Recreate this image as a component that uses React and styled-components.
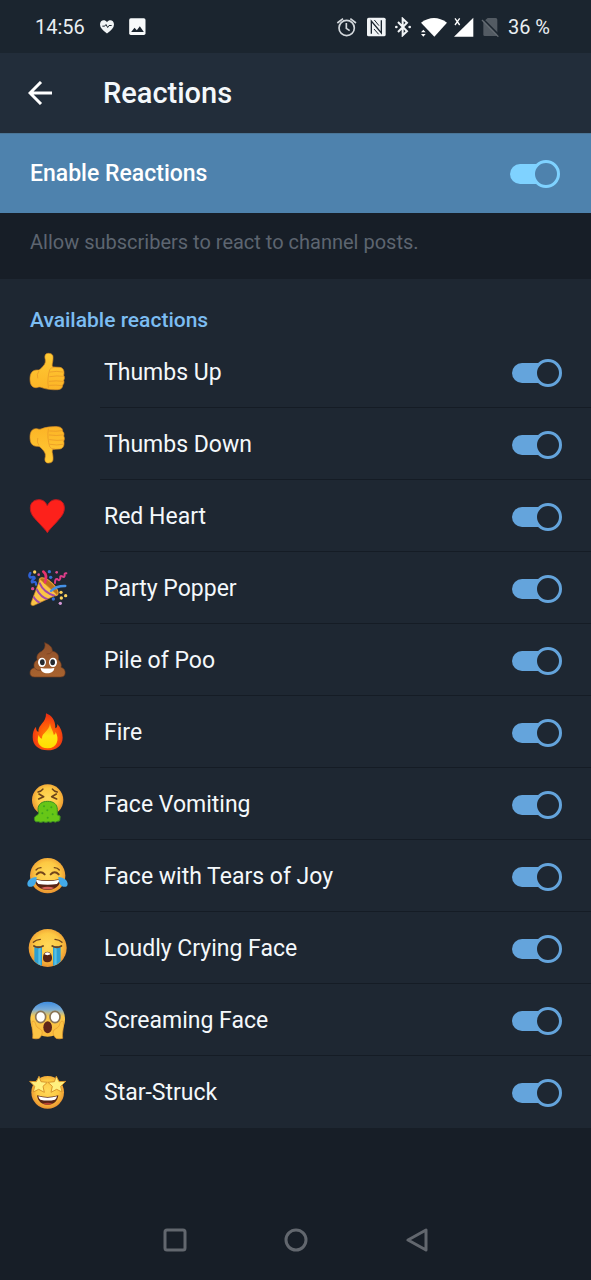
import React, { useState } from "react";
import styled, { createGlobalStyle } from "styled-components";

const GlobalStyle = createGlobalStyle`
  *,
  *::before,
  *::after {
    box-sizing: border-box;
  }

  body {
    margin: 0;
    background-color: #171e27;
    font-family: Roboto, "Liberation Sans", sans-serif;
    color: #f4f8fb;
  }
`;

const Page = styled.div`
  min-height: 100vh;
  display: flex;
  flex-direction: column;
`;

const StatusBar = styled.div`
  height: 53px;
  padding: 0 41px 0 35px;
  display: flex;
  align-items: center;
  justify-content: space-between;
  background-color: #1b252f;
  color: #e9eef2;
  font-size: 20px;
  line-height: 24px;
`;

const StatusGroup = styled.div`
  display: flex;
  align-items: center;
  gap: ${(props) => props.$gap}px;
`;

const Header = styled.header`
  height: 80px;
  padding: 0 28px;
  display: flex;
  align-items: center;
  gap: 51px;
  background-color: #222d3a;

  h1 {
    margin: 0;
    font-size: 29px;
    font-weight: 500;
    line-height: 36px;
  }
`;

const BackButton = styled.button`
  width: 24px;
  height: 24px;
  padding: 0;
  border: none;
  background: none;
  color: white;
  cursor: pointer;
`;

const EnableRow = styled.label`
  height: 80px;
  padding: 1px 31px 0 30px;
  display: flex;
  align-items: center;
  justify-content: space-between;
  background-color: #4e82ad;
  border-top: 1px solid #4a7596;
  color: white;
  font-size: 23px;
  font-weight: 500;
  line-height: 28px;
  cursor: pointer;
`;

const Info = styled.p`
  height: 66px;
  margin: 0;
  padding: 16px 30px;
  color: #5d6570;
  font-size: 20px;
  line-height: 26px;
`;

const Section = styled.section`
  background-color: #1e2732;

  h2 {
    margin: 0;
    padding: 27px 30px 2px;
    color: #7cbdf2;
    font-size: 21px;
    font-weight: 500;
    line-height: 28px;
  }
`;

const List = styled.ul`
  margin: 0;
  padding: 0;
  list-style: none;
`;

const Row = styled.label`
  height: 72px;
  padding-left: 27px;
  display: flex;
  align-items: center;
  gap: 33px;
  cursor: pointer;
`;

const RowBody = styled.span`
  flex: 1;
  align-self: stretch;
  padding: 3px 29px 0 4px;
  display: flex;
  align-items: center;
  justify-content: space-between;
  border-bottom: 1px solid #151c25;
  font-size: 23px;
  line-height: 28px;

  li:last-child & {
    border-bottom-color: transparent;
  }
`;

const Toggle = styled.input`
  appearance: none;
  width: 50px;
  height: 28px;
  margin: 0;
  display: grid;
  align-items: center;
  cursor: pointer;

  &::before,
  &::after {
    content: "";
    grid-area: 1 / 1;
  }

  &::before {
    width: 40px;
    height: 20px;
    border-radius: 10px;
    background-color: ${(props) => props.$color};
  }

  &::after {
    width: 28px;
    height: 28px;
    justify-self: end;
    border: 3px solid ${(props) => props.$color};
    border-radius: 50%;
    background-color: ${(props) => props.$fill};
  }

  &:not(:checked)::before {
    justify-self: end;
    opacity: 0.4;
  }

  &:not(:checked)::after {
    justify-self: start;
  }
`;

const NavBar = styled.nav`
  height: 80px;
  margin-top: auto;
  padding: 0 114px;
  display: flex;
  color: #62676e;
`;

const NavButton = styled.button`
  flex: 1;
  padding: 0;
  display: flex;
  align-items: center;
  justify-content: center;
  border: none;
  background: none;
  color: inherit;
  cursor: pointer;
`;

const Emoji = styled.svg`
  width: 40px;
  height: 40px;
  flex: none;
  overflow: visible;
`;

const Defs = styled.svg`
  width: 0;
  height: 0;
  display: block;
`;

const Gradients = () => (
  <Defs aria-hidden="true">
    <defs>
      <radialGradient id="skin" cx="50%" cy="45%" r="55%">
        <stop offset="0" stopColor="#ffd95a" />
        <stop offset="0.6" stopColor="#fdc943" />
        <stop offset="1" stopColor="#eb9330" />
      </radialGradient>
      <linearGradient id="hand" x1="0" y1="0" x2="0" y2="1">
        <stop offset="0" stopColor="#ffcb35" />
        <stop offset="1" stopColor="#fcb426" />
      </linearGradient>
      <linearGradient id="scared" x1="0" y1="0" x2="0" y2="1">
        <stop offset="0" stopColor="#3e8de0" />
        <stop offset="0.22" stopColor="#78abd8" />
        <stop offset="0.42" stopColor="#fbcb4e" />
        <stop offset="1" stopColor="#f9b93a" />
      </linearGradient>
      <radialGradient id="flame" cx="50%" cy="60%" r="60%">
        <stop offset="0" stopColor="#ff8a00" />
        <stop offset="0.65" stopColor="#fb4c0c" />
        <stop offset="1" stopColor="#e52a14" />
      </radialGradient>
      <linearGradient id="core" x1="0" y1="0" x2="0" y2="1">
        <stop offset="0" stopColor="#ffa51c" />
        <stop offset="0.5" stopColor="#ffe512" />
        <stop offset="1" stopColor="#ffdc00" />
      </linearGradient>
      <linearGradient id="poo" x1="0" y1="0" x2="0" y2="1">
        <stop offset="0" stopColor="#8f502b" />
        <stop offset="1" stopColor="#a8632f" />
      </linearGradient>
      <clipPath id="cone">
        <path d="M39 34 L90 80 L21 112 Q11 115 12 105 Z" />
      </clipPath>
      <clipPath id="cryFace">
        <circle cx="62" cy="60" r="56" />
      </clipPath>
    </defs>
  </Defs>
);

const Thumb = () => (
  <>
    <path
      d="M64 4C54 4 52 13 55 23C57 34 50 41 43 48C39 53 35 55 30 54C14 54 9 66 9 81C9 96 14 107 27 107C33 107 36 104 42 106C56 112 76 114 92 113C103 112 107 107 107 99C111 96 112 90 110 85C113 80 113 74 110 70C113 60 110 47 98 46L80 45C74 44 75 38 77 30C78 24 79 14 77 10C75 6 70 4 64 4Z"
      fill="url(#hand)"
      stroke="#d98c22"
      strokeWidth="2"
    />
    <g fill="none" stroke="#e59226" strokeWidth="2" strokeLinecap="round">
      <path d="M64 106C61 88 63 70 68 53Q72 46 82 46" />
      <path d="M69 60Q90 56 108 60M68 74Q90 70 110 73M67 88Q88 85 108 88M68 100Q88 98 104 101" />
      <path d="M35 58Q28 66 32 78" />
    </g>
  </>
);

const ThumbsUp = () => <Thumb />;

const ThumbsDown = () => (
  <g transform="translate(0 121) scale(1 -1)">
    <Thumb />
  </g>
);

const RedHeart = () => (
  <path
    d="M61 110C56 102 47 93 33 78C18 62 10 53 10 36C10 20 21 11 36 11C49 11 57 19 61 30C65 19 74 11 87 11C102 11 112 20 112 36C112 53 103 62 89 78C75 93 66 102 61 110Z"
    fill="#fd211b"
    stroke="#bd1b20"
    strokeWidth="3"
  />
);

const PartyPopper = () => (
  <>
    <ellipse cx="65" cy="56" rx="36" ry="15" transform="rotate(43 65 56)" fill="#b9701c" stroke="#eda534" strokeWidth="3" />
    <path d="M39 34 L90 80 L21 112 Q11 115 12 105 Z" fill="#fbc546" stroke="#d18a25" strokeWidth="2" />
    <path
      d="M37 44Q50 74 84 84M28 62Q40 88 66 96M18 84Q28 102 44 106"
      clipPath="url(#cone)"
      fill="none"
      stroke="#a44aa6"
      strokeWidth="6"
    />
    <g fill="none" strokeLinecap="round" strokeLinejoin="round" strokeWidth="7">
      <path d="M10 15Q4 24 10 29Q23 24 23 31Q12 38 15 43Q28 38 27 50" stroke="#2f62d6" />
      <path d="M49 11Q62 21 54 43" stroke="#e8336e" strokeWidth="8" />
      <path d="M84 45Q84 31 91 33Q97 41 100 31Q98 21 106 25Q113 30 113 21Q111 15 118 16" stroke="#dc3d89" strokeWidth="6" />
      <path d="M72 69Q88 53 115 54" stroke="#4591e6" />
    </g>
    <g fill="#fcd15b">
      <circle cx="23" cy="12" r="5" />
      <circle cx="102" cy="73" r="5" />
      <circle cx="116" cy="83" r="5" />
      <circle cx="103" cy="90" r="5" />
    </g>
    <g fill="#3572d8">
      <circle cx="67" cy="11" r="5" />
      <circle cx="71" cy="28" r="5" />
      <circle cx="79" cy="93" r="5" />
    </g>
    <g fill="#db4c90">
      <circle cx="89" cy="13" r="4" />
      <circle cx="35" cy="20" r="4" />
      <circle cx="17" cy="62" r="5" />
      <circle cx="100" cy="106" r="5" fill="#d498d5" />
    </g>
  </>
);

const PileOfPoo = () => (
  <>
    <path
      d="M53 8C67 13 77 22 76 34C90 36 97 45 94 59C101 65 105 74 102 82C113 85 117 96 113 105C111 109 107 111 100 111H23C13 111 9 106 9 99C9 90 14 85 22 83C19 74 22 64 31 60C27 48 33 39 44 34C53 27 56 18 53 8Z"
      fill="url(#poo)"
      stroke="#6f3d20"
      strokeWidth="2"
    />
    <path d="M22 84Q30 93 43 91M31 61Q38 68 42 50M76 34Q70 43 59 42" fill="none" stroke="#814524" strokeWidth="3" />
    <ellipse cx="45" cy="67" rx="12" ry="14" fill="#fff" />
    <ellipse cx="78" cy="67" rx="12" ry="14" fill="#fff" />
    <ellipse cx="46" cy="67" rx="7" ry="9" fill="#24292f" />
    <ellipse cx="77" cy="67" rx="7" ry="9" fill="#24292f" />
    <path d="M41 84Q61 87 82 84C81 95 72 100 61 100S42 95 41 84Z" fill="#fff" />
  </>
);

const Fire = () => (
  <>
    <path
      d="M57 4C74 10 86 25 85 49C90 48 91 42 91 36C101 46 107 62 107 77C107 101 88 115 62 115C35 115 17 101 17 76C17 62 20 51 27 44C27 52 29 58 34 60C33 36 58 34 57 4Z"
      fill="url(#flame)"
    />
    <path
      d="M69 34C71 49 78 55 80 68C84 67 86 64 86 59C98 82 91 108 62 109C37 109 27 89 35 69C37 75 40 79 45 80C44 62 66 60 69 34Z"
      fill="url(#core)"
    />
  </>
);

const FaceVomiting = () => (
  <>
    <circle cx="62" cy="48" r="47" fill="url(#skin)" />
    <g fill="none" stroke="#6b431b" strokeWidth="5" strokeLinecap="round" strokeLinejoin="round">
      <path d="M36 30L50 38L35 45M88 30L74 38L89 45" />
      <path d="M33 24Q43 22 48 15M91 24Q81 22 76 15" strokeWidth="4" />
    </g>
    <path
      d="M33 77C33 60 45 52 62 52S91 60 91 77V93Q102 94 99 102Q101 113 91 112Q85 117 78 112Q72 117 64 113Q57 117 49 113Q41 117 34 113Q25 116 23 109Q19 101 27 95Q34 93 35 87Z"
      fill="#67c617"
      stroke="#3b8d20"
      strokeWidth="3"
    />
    <g fill="#3da51d">
      <circle cx="51" cy="67" r="3" />
      <circle cx="73" cy="70" r="3" />
      <circle cx="61" cy="79" r="3" />
      <circle cx="46" cy="88" r="3" />
      <circle cx="77" cy="91" r="3" />
      <circle cx="62" cy="101" r="3" />
    </g>
  </>
);

const TearsOfJoy = () => (
  <>
    <circle cx="62" cy="59" r="53" fill="url(#skin)" />
    <g fill="none" stroke="#72451b" strokeLinecap="round">
      <path d="M29 55Q41 42 53 55M71 55Q83 42 95 55" strokeWidth="6" />
      <path d="M27 42Q32 35 42 35M97 42Q92 35 82 35" strokeWidth="4" />
    </g>
    <path d="M23 69Q62 77 101 69C101 89 83 102 62 102S23 89 23 69Z" fill="#572416" />
    <path d="M27 71Q62 79 97 71Q96 80 90 84Q62 88 34 84Q28 80 27 71Z" fill="#fff" />
    <path d="M42 96Q62 89 82 96Q62 105 42 96Z" fill="#d9635a" />
    <path d="M29 63C11 65 2 73 1 83C1 91 7 94 14 92C24 90 28 79 29 63Z" fill="#43aae9" />
    <path d="M94 63C112 65 121 73 122 83C122 91 116 94 109 92C99 90 95 79 94 63Z" fill="#43aae9" />
  </>
);

const LoudlyCrying = () => (
  <>
    <circle cx="62" cy="60" r="57" fill="url(#skin)" />
    <g clipPath="url(#cryFace)" fill="#2f9fd1">
      <path d="M22 55H45V120H22Z" />
      <path d="M78 55H101V120H78Z" />
      <path d="M34 57H41V120H34ZM82 57H89V120H82Z" fill="#58c0e4" />
    </g>
    <g fill="none" stroke="#6f431e" strokeLinecap="round">
      <path d="M21 54Q34 62 48 54M76 54Q89 62 103 54" strokeWidth="6" />
      <path d="M19 43Q27 35 40 34M105 43Q97 35 84 34" strokeWidth="4" />
    </g>
    <path d="M61 71C70 71 75 80 75 90C75 99 70 103 61 103S48 99 48 90C48 80 52 71 61 71Z" fill="#572416" />
    <path d="M52 79Q55 73 61 73T71 79Q61 84 52 79Z" fill="#fff" />
  </>
);

const Screaming = () => (
  <>
    <path
      d="M62 5C94 5 114 27 114 58C114 88 94 110 62 110S10 88 10 58C10 27 30 5 62 5Z"
      fill="url(#scared)"
    />
    <g fill="#fff" stroke="#8b7556" strokeWidth="5">
      <ellipse cx="41" cy="51" rx="15" ry="17" />
      <ellipse cx="84" cy="51" rx="15" ry="17" />
    </g>
    <ellipse cx="62" cy="82" rx="13" ry="18" fill="#5d2419" />
    <g fill="#fcc445" stroke="#e6982e" strokeWidth="2">
      <path d="M15 65C21 61 25 66 27 76C30 84 37 85 43 90C49 98 43 109 37 115Q27 118 17 115C20 99 12 80 15 65Z" />
      <path d="M109 65C103 61 99 66 97 76C94 84 87 85 81 90C75 98 81 109 87 115Q97 118 107 115C104 99 112 80 109 65Z" />
    </g>
  </>
);

const StarStruck = () => (
  <>
    <circle cx="62" cy="61" r="49" fill="url(#skin)" />
    <path d="M30 70Q62 80 94 70C92 88 80 98 62 98S32 88 30 70Z" fill="#572416" />
    <path d="M34 73Q62 81 90 73Q89 80 84 83Q62 88 40 83Q35 80 34 73Z" fill="#fff" />
    <path d="M46 95Q62 89 78 95Q62 101 46 95Z" fill="#b8402f" />
    <g fill="#fff07f" stroke="#d9962c" strokeWidth="3" strokeLinejoin="round">
      <path d="M36 13L42 29L61 31L48 43L52 61L35 52L19 60L23 43L8 28L28 29Z" />
      <path d="M88 13L82 29L63 31L76 43L72 61L89 52L105 60L101 43L116 28L96 29Z" />
    </g>
  </>
);

const reactions = [
  { name: "Thumbs Up", Icon: ThumbsUp },
  { name: "Thumbs Down", Icon: ThumbsDown },
  { name: "Red Heart", Icon: RedHeart },
  { name: "Party Popper", Icon: PartyPopper },
  { name: "Pile of Poo", Icon: PileOfPoo },
  { name: "Fire", Icon: Fire },
  { name: "Face Vomiting", Icon: FaceVomiting },
  { name: "Face with Tears of Joy", Icon: TearsOfJoy },
  { name: "Loudly Crying Face", Icon: LoudlyCrying },
  { name: "Screaming Face", Icon: Screaming },
  { name: "Star-Struck", Icon: StarStruck },
];

const StatusIcons = () => (
  <>
    <svg width="23" height="20" viewBox="45 49 69 60" fill="none" stroke="#d3d8dc" strokeWidth="5">
      <circle cx="77" cy="82" r="23" />
      <path d="M76 67V83L86 90M49 67L66 54M105 67L88 54" />
    </svg>
    <svg width="21" height="20" viewBox="135 48 63 60">
      <rect x="138" y="50" width="56" height="56" rx="5" fill="#f1f4f6" />
      <path d="M151 98V60L181 96V58" fill="none" stroke="#1b252f" strokeWidth="4" />
      <path d="M160 57L174 74M159 84L173 100" fill="none" stroke="#1b252f" strokeWidth="3" />
    </svg>
    <svg width="19" height="20" viewBox="219 48 57 60" fill="none" stroke="#f1f4f6" strokeWidth="6">
      <path d="M231 63L258 91L245 103V53L258 65L231 93" />
      <circle cx="226" cy="78" r="4" fill="#f1f4f6" stroke="none" />
      <circle cx="266" cy="78" r="4" fill="#f1f4f6" stroke="none" />
    </svg>
    <svg width="27" height="20" viewBox="297 48 81 60" fill="#fff">
      <path d="M300 65Q339 37 378 65L340 107Z" />
      <path d="M300 94L307 86L314 94ZM300 99L307 107L314 99Z" />
    </svg>
    <svg width="20" height="20" viewBox="399 48 60 60" fill="#fff">
      <path d="M457 50V107H399Z" />
      <path d="M402 52L416 72M416 52L402 72" stroke="#fff" strokeWidth="4" />
    </svg>
    <svg width="20" height="20" viewBox="480 48 60 60">
      <path d="M487 62L500 51H524Q529 51 529 56V105H491Q487 105 487 101Z" fill="#535b63" />
      <path d="M486 54L535 103" stroke="#1b252f" strokeWidth="5" />
      <path d="M483 57L532 107" stroke="#646b72" strokeWidth="4" />
    </svg>
  </>
);

const App = () => {
  const [enabled, setEnabled] = useState(true);
  const [active, setActive] = useState(reactions.map((r) => r.name));

  const handleToggle = (name) => {
    if (active.includes(name)) {
      setActive(active.filter((n) => n !== name));
    } else {
      setActive([...active, name]);
    }
  };

  return (
    <>
      <GlobalStyle />
      <Gradients />
      <Page>
        <StatusBar>
          <StatusGroup $gap={15}>
            <span>14:56</span>
            <svg width="14" height="14" viewBox="300 60 42 41">
              <path d="M321 100Q300 85 300 73C300 60 314 56 321 66C328 56 342 60 342 73Q342 85 321 100Z" fill="#f1f4f6" />
              <path d="M307 78H314L318 73L323 82L327 76H335" fill="none" stroke="#1b252f" strokeWidth="3" />
            </svg>
            <svg width="17" height="17" viewBox="386 54 50 51">
              <rect x="386" y="55" width="49" height="50" rx="5" fill="#f8fafb" />
              <path d="M392 96L402 83L409 91L418 79L430 96Z" fill="#1b252f" />
            </svg>
          </StatusGroup>
          <StatusGroup $gap={7}>
            <StatusIcons />
            <span>36 %</span>
          </StatusGroup>
        </StatusBar>

        <Header>
          <BackButton type="button" aria-label="Back">
            <svg width="24" height="24" viewBox="0 0 24 24" fill="none" stroke="currentColor" strokeWidth="3">
              <path d="M24 12H3M13 1L2 12L13 23" />
            </svg>
          </BackButton>
          <h1>Reactions</h1>
        </Header>

        <main>
          <EnableRow>
            Enable Reactions
            <Toggle
              type="checkbox"
              $color="#7fd2ff"
              $fill="#4e82ad"
              checked={enabled}
              onChange={() => setEnabled(!enabled)}
            />
          </EnableRow>
          <Info>Allow subscribers to react to channel posts.</Info>

          <Section>
            <h2>Available reactions</h2>
            <List>
              {reactions.map(({ name, Icon }) => (
                <li key={name}>
                  <Row>
                    <Emoji viewBox="0 0 120 120" aria-hidden="true">
                      <Icon />
                    </Emoji>
                    <RowBody>
                      {name}
                      <Toggle
                        type="checkbox"
                        $color="#64a4dc"
                        $fill="#1e2732"
                        checked={active.includes(name)}
                        onChange={() => handleToggle(name)}
                      />
                    </RowBody>
                  </Row>
                </li>
              ))}
            </List>
          </Section>
        </main>

        <NavBar>
          <NavButton type="button" aria-label="Recent apps">
            <svg width="24" height="24" viewBox="0 0 24 24" fill="none" stroke="currentColor" strokeWidth="3">
              <rect x="2" y="2" width="20" height="20" rx="2" />
            </svg>
          </NavButton>
          <NavButton type="button" aria-label="Home">
            <svg width="24" height="24" viewBox="0 0 24 24" fill="none" stroke="currentColor" strokeWidth="3">
              <circle cx="12" cy="12" r="10" />
            </svg>
          </NavButton>
          <NavButton type="button" aria-label="Go back">
            <svg width="24" height="24" viewBox="0 0 24 24" fill="none" stroke="currentColor" strokeWidth="3" strokeLinejoin="round">
              <path d="M21 2V22L3 12Z" />
            </svg>
          </NavButton>
        </NavBar>
      </Page>
    </>
  );
};

export default App;
